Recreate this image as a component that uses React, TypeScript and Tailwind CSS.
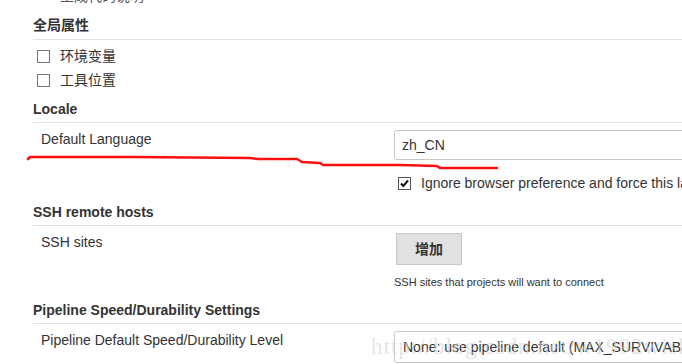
import React from "react";

const font = "font-['Liberation_Sans','Noto_Sans_CJK_SC',sans-serif]";
const cols = "grid grid-cols-[361px_1fr]";

function Heading({ title, className = "" }: { title: string; className?: string }) {
  return (
    <div
      className={`h-[27px] border-b border-[#e1e1e1] text-[14px] font-bold leading-[26px] text-[#333] ${className}`}
    >
      {title}
    </div>
  );
}

function Box({ checked = false }: { checked?: boolean }) {
  return (
    <svg width="13" height="13" viewBox="0 0 13 13" className="shrink-0">
      <rect x="0.5" y="0.5" width="12" height="12" fill="#fff" stroke={checked ? "#555" : "#777"} />
      {checked ? (
        <path d="M3 6.5 L5.3 9 L10 3.5" fill="none" stroke="#111" strokeWidth="2" />
      ) : null}
    </svg>
  );
}

export default function App() {
  return (
    <div className={`relative h-[364px] w-[682px] overflow-hidden bg-white ${font} text-[#333]`}>
      <div className="pl-[33px]">
        {/* cut-off row from above */}
        <div className="h-[11px] overflow-hidden pl-[27px]">
          <div className="-mt-[11px] text-[14px] leading-[14px] text-[#555]">生成代码说明</div>
        </div>

        <div className="h-[29px] border-b border-[#e1e1e1] text-[14px] font-bold leading-[28px]">
          全局属性
        </div>
        <div className="mt-[4px]">
          {["环境变量", "工具位置"].map((label) => (
            <div key={label} className="flex h-[24px] items-center pl-[4px] text-[14px]">
              <Box />
              <span className="ml-[10px]">{label}</span>
            </div>
          ))}
        </div>

        <Heading title="Locale" className="mt-[4px]" />
        <div className={cols}>
          <div className="pl-[8px] pt-[6px] text-[14px] leading-[20px]">Default Language</div>
          <div>
            <div className="mt-[7px] flex h-[30px] w-[320px] items-center rounded-[3px] border border-[#c6c6c6] pl-[7px] text-[14px]">
              zh_CN
            </div>
            <div className="mt-[13px] flex h-[20px] items-center pl-[4px] text-[14px]">
              <Box checked />
              <span className="ml-[10px] whitespace-nowrap">
                Ignore browser preference and force this language to all users
              </span>
            </div>
          </div>
        </div>

        <Heading title="SSH remote hosts" className="mt-[6px]" />
        <div className={cols}>
          <div className="pl-[8px] pt-[6px] text-[14px] leading-[20px]">SSH sites</div>
          <div>
            <button className="ml-[2px] mt-[7px] h-[32px] w-[66px] border border-[#c8c8c8] bg-[#e1e1e1] text-[14px] font-bold text-[#333]">
              增加
            </button>
            <div className="mt-[10px] whitespace-nowrap text-[11px] leading-[14px]">
              SSH sites that projects will want to connect
            </div>
          </div>
        </div>

        <Heading title="Pipeline Speed/Durability Settings" className="mt-[8px]" />
        <div className={cols}>
          <div className="pl-[8px] pt-[6px] text-[14px] leading-[20px]">
            Pipeline Default Speed/Durability Level
          </div>
          <div>
            <div className="mt-[7px] flex h-[32px] w-[320px] items-center whitespace-nowrap rounded-[3px] border border-[#c6c6c6] pl-[8px] text-[14px]">
              None: use pipeline default (MAX_SURVIVABILITY)
            </div>
          </div>
        </div>
      </div>

      {/* hand-drawn red underline */}
      <svg className="pointer-events-none absolute left-0 top-0" width="682" height="364">
        <polyline
          points="28,159 30,157 133,157 250,158 258,159 297,159 302,162 320,163 323,165 400,165 437,166 440,168 497,168"
          fill="none"
          stroke="#ff1010"
          strokeWidth="2.6"
          strokeLinejoin="round"
          strokeLinecap="round"
        />
      </svg>

      {/* watermark */}
      <div className="pointer-events-none absolute left-[371px] top-[333px] whitespace-nowrap font-['Liberation_Serif',serif] text-[23px] leading-[28px] tracking-[1px] text-[#d4d4d4]/60">
        http://blog.csdn.net/w1992wishes
      </div>
    </div>
  );
}
